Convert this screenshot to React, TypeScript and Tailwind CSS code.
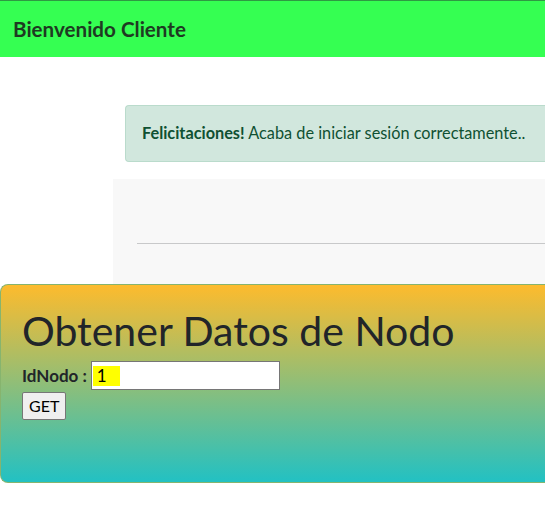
export default function App() {
  const font = { fontFamily: 'Lato, "Noto Sans", sans-serif' };
  return (
    <div className="w-[545px] h-[515px] overflow-hidden bg-white text-[#212529]" style={font}>
      <div className="h-[57px] bg-[#35ff52] border-t border-[#2f9a43] flex items-center pl-[13px]">
        <span className="text-[20.6px] font-bold text-[#1f3a22]">Bienvenido Cliente</span>
      </div>
      <div className="mt-[48px] ml-[125px] h-[57px] bg-[#d1e7dd] border border-[#badbcc] rounded-l-[4px] border-r-0 flex items-center pl-[16px] text-[16.3px] text-[#0f5132] whitespace-nowrap">
        <b>Felicitaciones!</b>&nbsp;Acaba de iniciar sesión correctamente..
      </div>
      <div className="mt-[17px] ml-[113px] h-[105px] bg-[#f8f8f8] pt-[64px] pl-[24px]">
        <div className="h-px bg-[#c8c9ca]" />
      </div>
      <div className="h-[199px] rounded-l-[8px] border border-r-0 border-[#86b46e] bg-[linear-gradient(0deg,#22c1c3_0%,#fdbb2d_100%)] pl-[21px] pt-[22px]">
        <h1 className="text-[41px] leading-[48px] font-normal text-[#212529] whitespace-nowrap">Obtener Datos de Nodo</h1>
        <div className="mt-[6px] flex items-center h-[29px]">
          <span className="text-[17px] font-bold mr-[4px]">IdNodo :</span>
          <div className="w-[189px] h-[29px] bg-white border border-[#767676] flex items-center pl-[1px]">
            <span className="bg-[#ffff00] text-[17px] leading-[20px] w-[27px] pl-[4px] text-black">1</span>
          </div>
        </div>
        <button className="mt-[2px] h-[28px] px-[6px] bg-[#efefef] border border-[#767676] rounded-[2px] text-[16px] text-black">GET</button>
      </div>
    </div>
  );
}
